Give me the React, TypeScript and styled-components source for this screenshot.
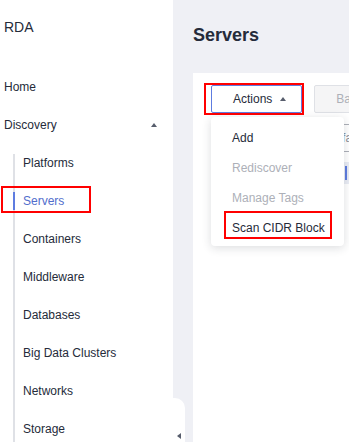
import React from "react";
import styled, { createGlobalStyle, css } from "styled-components";

const GlobalStyle = createGlobalStyle`
  html, body { margin: 0; padding: 0; }
  body {
    font-family: "Liberation Sans", Arial, sans-serif;
    font-size: 12px;
    color: #252b3a;
    background: #eff0f5;
  }
  * { box-sizing: border-box; }
`;

const Shell = styled.div`
  display: flex;
  width: 349px;
  height: 442px;
  overflow: hidden;
  background: #eff0f5;
`;

const Sidebar = styled.aside`
  position: relative;
  z-index: 2;
  flex: 0 0 173px;
  width: 173px;
  background: #ffffff;
  display: flex;
  flex-direction: column;
`;

const Brand = styled.div`
  height: 54px;
  line-height: 54px;
  padding-left: 4px;
  font-size: 14px;
  color: #252b3a;
`;

const Divider = styled.div`
  margin: 3px 0 0 3px;
  width: 132px;
  height: 1px;
  background: #dfe1e6;
`;

const NavList = styled.nav`
  padding-top: 11px;
  display: flex;
  flex-direction: column;
`;

const NavItem = styled.div`
  height: 38px;
  display: flex;
  align-items: center;
  justify-content: space-between;
  padding: 0 16px 0 4px;
  font-size: 12px;
  color: #252b3a;
`;

const CaretUp = styled.span`
  width: 0;
  height: 0;
  border-left: 3.5px solid transparent;
  border-right: 3.5px solid transparent;
  border-bottom: 4px solid #575d6c;
`;

const SubMenu = styled.div`
  position: relative;
  margin-left: 13px;
  display: flex;
  flex-direction: column;
  &::before {
    content: "";
    position: absolute;
    left: 0;
    top: 10px;
    bottom: -40px;
    width: 2px;
    background: #dfe1e6;
  }
`;

const SubItem = styled.div<{ $active?: boolean }>`
  position: relative;
  height: 38px;
  display: flex;
  align-items: center;
  padding-left: 10px;
  font-size: 12px;
  color: ${(p) => (p.$active ? "#526ecc" : "#252b3a")};
  ${(p) =>
    p.$active &&
    css`
      &::before {
        content: "";
        position: absolute;
        left: 0;
        top: 10px;
        width: 2px;
        height: 18px;
        background: #5e7ce0;
      }
    `}
`;

const SideAnnot = styled.span`
  position: absolute;
  left: -12px;
  top: 4px;
  width: 90px;
  height: 27px;
  border: 2px solid #ff0000;
`;

const CollapseTab = styled.div`
  position: absolute;
  left: 173px;
  top: 398px;
  width: 12px;
  height: 60px;
  background: #ffffff;
  border-top-right-radius: 10px;
  &::after {
    content: "";
    position: absolute;
    left: 4px;
    top: 35px;
    width: 0;
    height: 0;
    border-top: 3.5px solid transparent;
    border-bottom: 3.5px solid transparent;
    border-right: 4px solid #575d6c;
  }
`;

const Main = styled.main`
  flex: 1 0 auto;
  min-width: 0;
  padding-left: 20px;
  display: flex;
  flex-direction: column;
`;

const PageHeader = styled.header`
  height: 73px;
  padding-bottom: 3px;
  display: flex;
  align-items: center;
`;

const PageTitle = styled.h1`
  margin: 0;
  font-size: 18px;
  font-weight: bold;
  color: #252b3a;
`;

const Card = styled.section`
  position: relative;
  flex: 1;
  width: 420px;
  background: #ffffff;
  padding: 12px 0 0 18px;
`;

const Toolbar = styled.div`
  display: flex;
  gap: 12px;
  flex-wrap: nowrap;
`;

const Button = styled.button<{ $disabled?: boolean; $focused?: boolean }>`
  position: relative;
  flex-shrink: 0;
  height: 28px;
  display: flex;
  align-items: center;
  gap: 8px;
  padding: 0 15px 0 21px;
  font-family: inherit;
  font-size: 12px;
  border-radius: 2px;
  white-space: nowrap;
  background: ${(p) => (p.$disabled ? "#f5f5f6" : "#ffffff")};
  color: ${(p) => (p.$disabled ? "#adb0b8" : "#252b3a")};
  border: 1px solid
    ${(p) => (p.$focused ? "#5e7ce0" : p.$disabled ? "#dfe1e6" : "#adb0b8")};
`;

const BtnCaret = styled(CaretUp)`
  border-bottom-color: #575d6c;
`;

const ButtonAnnot = styled.span`
  position: absolute;
  left: -8px;
  right: -3px;
  top: -3px;
  bottom: -3px;
  border: 2px solid #ff0000;
`;

const SearchBox = styled.div`
  margin-top: 11px;
  width: 360px;
  height: 28px;
  display: flex;
  align-items: center;
  padding-left: 3px;
  border-top: 1px solid #adb0b8;
  border-bottom: 1px solid #adb0b8;
  color: #8a8e99;
  font-size: 12px;
  white-space: nowrap;
`;

const FilterBand = styled.div`
  margin-top: 10px;
  width: 380px;
  height: 22px;
  display: flex;
  align-items: center;
  background: #e9ecf4;
  font-size: 12px;
  white-space: nowrap;
`;

const BandLabel = styled.span`
  width: 134px;
  padding-left: 8px;
  color: #575d6c;
`;

const BandTag = styled.span`
  display: flex;
  align-items: center;
  gap: 3px;
  color: #e3a344;
  &::before {
    content: "";
    width: 2px;
    height: 14px;
    background: #5e7ce0;
  }
`;

const Menu = styled.ul`
  position: absolute;
  left: 18px;
  top: 44px;
  width: 133px;
  margin: 0;
  padding: 5px 0 4px;
  list-style: none;
  background: #ffffff;
  border-radius: 4px;
  box-shadow: 0 2px 10px rgba(37, 43, 58, 0.16);
  z-index: 5;
`;

const MenuItem = styled.li<{ $disabled?: boolean }>`
  height: 30px;
  display: flex;
  align-items: center;
  padding-left: 21px;
  padding-top: 1px;
  font-size: 12px;
  color: ${(p) => (p.$disabled ? "#adb0b8" : "#252b3a")};
`;

const MenuText = styled.span`
  position: relative;
  line-height: 14px;
`;

const MenuAnnot = styled.span`
  position: absolute;
  left: -8px;
  right: -7px;
  top: -10px;
  bottom: -4px;
  border: 2px solid #ff0000;
`;

const subItems = [
  "Platforms",
  "Servers",
  "Containers",
  "Middleware",
  "Databases",
  "Big Data Clusters",
  "Networks",
  "Storage",
];

const menuItems = [
  { label: "Add", disabled: false },
  { label: "Rediscover", disabled: true },
  { label: "Manage Tags", disabled: true },
  { label: "Scan CIDR Block", disabled: false, marked: true },
];

export default function App() {
  return (
    <>
      <GlobalStyle />
      <Shell>
        <Sidebar>
          <Brand>RDA</Brand>
          <Divider />
          <NavList>
            <NavItem>Home</NavItem>
            <NavItem>
              Discovery
              <CaretUp />
            </NavItem>
            <SubMenu>
              {subItems.map((s) => (
                <SubItem key={s} $active={s === "Servers"}>
                  {s}
                  {s === "Servers" && <SideAnnot />}
                </SubItem>
              ))}
            </SubMenu>
          </NavList>
          <CollapseTab />
        </Sidebar>
        <Main>
          <PageHeader>
            <PageTitle>Servers</PageTitle>
          </PageHeader>
          <Card>
            <Toolbar>
              <Button $focused>
                Actions
                <BtnCaret />
                <ButtonAnnot />
              </Button>
              <Button $disabled>Batch Export</Button>
            </Toolbar>
            <SearchBox>Search by name or interface</SearchBox>
            <FilterBand>
              <BandLabel>Filters</BandLabel>
              <BandTag>Status</BandTag>
            </FilterBand>
            <Menu>
              {menuItems.map((m) => (
                <MenuItem key={m.label} $disabled={m.disabled}>
                  <MenuText>
                    {m.label}
                    {m.marked && <MenuAnnot />}
                  </MenuText>
                </MenuItem>
              ))}
            </Menu>
          </Card>
        </Main>
      </Shell>
    </>
  );
}
